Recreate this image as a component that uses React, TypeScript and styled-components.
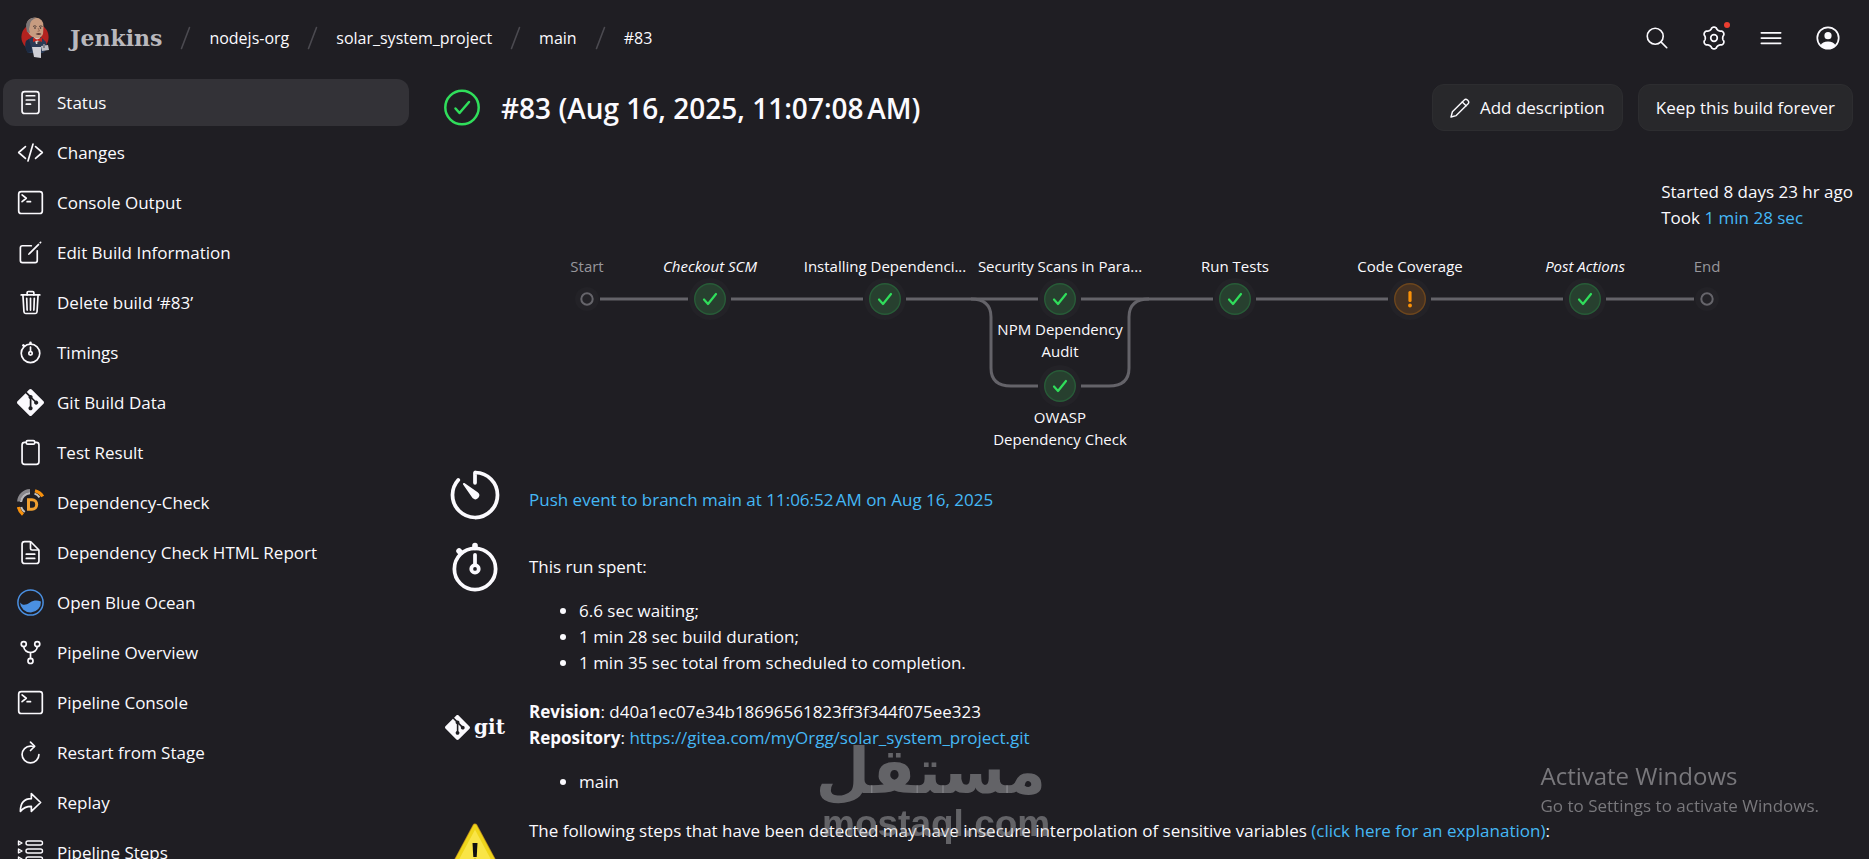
import React from "react";
import styled, { createGlobalStyle, css } from "styled-components";
import {
  IoReaderOutline,
  IoCodeSlashOutline,
  IoTerminalOutline,
  IoCreateOutline,
  IoTrashOutline,
  IoStopwatchOutline,
  IoClipboardOutline,
  IoDocumentTextOutline,
  IoGitNetworkOutline,
  IoRefreshOutline,
  IoArrowRedoOutline,
  IoSearchOutline,
  IoMenuOutline,
  IoTimerOutline,
} from "react-icons/io5";
import { SiGit } from "react-icons/si";

const color = {
  background: "#1f1e23",
  text: "#fbfafe",
  muted: "#97969b",
  link: "#45b8f5",
  active: "#333237",
  button: "#28282b",
  buttonBorder: "#2d2d30",
  green: "#30de5b",
  orange: "#fb9108",
  red: "#eb3e30",
};

const GlobalStyle = createGlobalStyle`
  *, *::before, *::after { box-sizing: border-box; }
  body {
    margin: 0;
    background: ${color.background};
    color: ${color.text};
    font-family: "Open Sans", "Noto Sans", sans-serif;
    font-size: 17px;
    line-height: 26px;
  }
  a { color: inherit; text-decoration: none; }
  ul, ol { list-style: none; margin: 0; padding: 0; }
`;

/* ---------- page frame ---------- */

const Page = styled.div`
  height: 100vh;
  overflow-y: auto;
  scrollbar-width: none;
`;

const Header = styled.header`
  display: flex;
  align-items: center;
  justify-content: space-between;
  height: 75px;
  padding: 0 27px 0 21px;
`;

const Brand = styled.a`
  display: flex;
  align-items: center;
  gap: 21px;
  color: #b9b8bd;
  font-family: "DejaVu Serif", Georgia, serif;
  font-size: 22px;
  font-weight: bold;
`;

const HeaderLeft = styled.div`
  display: flex;
  align-items: center;
`;

const Crumbs = styled.ol`
  display: flex;
  font-size: 16px;
`;

const Crumb = styled.li`
  display: flex;
  align-items: center;
  gap: 18px;
  margin-left: 18px;
`;

const HeaderActions = styled.div`
  display: flex;
  align-items: center;
  gap: 29px;
`;

const IconButton = styled.button`
  position: relative;
  display: grid;
  place-items: center;
  width: 28px;
  height: 28px;
  padding: 0;
  border: 0;
  background: none;
  color: ${color.text};
  font-size: 26px;
`;

const Alert = styled.span`
  position: absolute;
  top: -2px;
  right: -2px;
  width: 6px;
  height: 6px;
  border-radius: 50%;
  background: ${color.red};
`;

const Columns = styled.div`
  display: grid;
  grid-template-columns: 406px minmax(0, 1fr);
  gap: 32px;
  padding: 4px 16px 0 3px;
`;

/* ---------- side menu ---------- */

const Tasks = styled.ul`
  display: flex;
  flex-direction: column;
  gap: 3px;
`;

const Task = styled.a<{ $active?: boolean }>`
  display: flex;
  align-items: center;
  gap: 13px;
  height: 47px;
  padding: 0 14px;
  border-radius: 12px;
  ${(p) => p.$active && css`background: ${color.active};`}
`;

const TaskIcon = styled.span`
  display: grid;
  place-items: center;
  width: 27px;
  height: 27px;
  font-size: 27px;
`;

/* ---------- build header ---------- */

const Main = styled.main`
  padding-top: 5px;
`;

const BuildBar = styled.div`
  display: flex;
  align-items: center;
  gap: 15px;
  height: 47px;
`;

const Title = styled.h1`
  flex: 1;
  margin: 0 0 0 5px;
  font-size: 28px;
  font-weight: 600;
  line-height: 36px;
`;

const Button = styled.button`
  display: flex;
  align-items: center;
  gap: 10px;
  height: 47px;
  padding: 0 17px;
  border: 1px solid ${color.buttonBorder};
  border-radius: 12px;
  background: ${color.button};
  color: ${color.text};
  font: inherit;
`;

const Times = styled.div`
  width: fit-content;
  margin: 48px 0 0 auto;
`;

const Link = styled.a`
  color: ${color.link};
`;

/* ---------- stage graph ---------- */

const Graph = styled.section`
  position: relative;
  width: 1212px;
  height: 216px;
  margin: 20px auto 0;
  font-size: 15px;
  line-height: 22px;
`;

const StageLabel = styled.a<{ $x: number; $y: number; $italic?: boolean; $muted?: boolean }>`
  position: absolute;
  left: ${(p) => p.$x}px;
  top: ${(p) => p.$y}px;
  transform: translateX(-50%);
  text-align: center;
  white-space: pre;
  font-style: ${(p) => (p.$italic ? "italic" : "normal")};
  color: ${(p) => (p.$muted ? color.muted : color.text)};
`;

/* ---------- summary ---------- */

const Summary = styled.div`
  display: flex;
  flex-direction: column;
  gap: 16px;
`;

const SummaryRow = styled.section`
  display: grid;
  grid-template-columns: 68px 1fr;
  gap: 20px;
  align-items: start;
`;

const SummaryIcon = styled.span`
  display: flex;
  align-items: center;
  justify-content: center;
  gap: 4px;
  height: 56px;
  font-size: 60px;
`;

const GitWord = styled.span`
  font-family: "DejaVu Serif", serif;
  font-size: 20px;
  font-weight: bold;
  line-height: 26px;
`;

const Cause = styled.div`
  padding-top: 20px;
`;

const Spent = styled.div`
  padding-top: 15px;
`;

const Bullets = styled.ul`
  margin: 18px 0 7px;
  padding-left: 50px;
  list-style: disc;
`;

/* ---------- overlays ---------- */

const Watermark = styled.div`
  position: fixed;
  left: 822px;
  bottom: 15px;
  width: 224px;
  color: rgba(168, 168, 172, 0.5);
  font-weight: bold;
  text-align: center;
  white-space: nowrap;
  pointer-events: none;
`;

const WatermarkArabic = styled.div`
  font-family: "DejaVu Sans", sans-serif;
  font-size: 63px;
  line-height: 64px;
`;

const WatermarkLatin = styled.div`
  font-family: "Liberation Sans", Arial, sans-serif;
  font-size: 37px;
  line-height: 40px;
`;

const Activation = styled.aside`
  position: fixed;
  right: 50px;
  bottom: 40px;
  color: #79787c;
  pointer-events: none;
`;

const ActivationTitle = styled.div`
  font-size: 24px;
  line-height: 34px;
`;

/* ---------- drawings ---------- */

const JenkinsLogo = () => (
  <svg width="28" height="42" viewBox="0 0 28 42" aria-hidden="true">
    <circle cx="14" cy="20" r="13.6" fill="#b3221f" />
    <path d="M5 24 L11 20 L20 20 L25 25 Q27 33 22 36 L7 36 Q3 30 5 24Z" fill="#2a3a55" />
    <path d="M5 24 L8 22 L11 34 L7 36Q3 31 5 24Z" fill="#1c2a41" />
    <path d="M13 20 L19 20 L18 27 L15 27Z" fill="#d8d4d2" />
    <path d="M11 30 L20 30 L20 41 L13 40Z" fill="#cfcfd6" />
    <path d="M6 9 Q5 1 14 .5 Q23 1 22.5 10 L22 17 Q20 22 15 21 Q9 20 7 15Z" fill="#c79c80" />
    <path d="M6 15 Q3 5 9 2 Q12 0 15 1 Q9 3 9 8 L8 12 L9 16Z" fill="#7d7676" />
    <path d="M12 9.5 Q14 8 15.500 9.500 M18 9.500 Q20 8.200 21.500 9.500" stroke="#54403a" strokeWidth="1" fill="none" />
    <circle cx="14" cy="11" r=".8" fill="#2a2324" />
    <circle cx="19.500" cy="11" r=".8" fill="#2a2324" />
    <path d="M17 11 L18.500 14 L16.500 14.300" stroke="#8d5f4b" strokeWidth=".8" fill="none" />
    <path d="M14.500 17 Q18 15 20.500 17 Q18 19 14.500 17Z" fill="#5c3a34" />
    <path d="M12 20.500 L16 22.500 L21 20.500 L21 25 L16.500 23.500 L12 25Z" fill="#c3251f" />
    <circle cx="18" cy="26" r="1.800" fill="#3a3a40" />
    <path d="M20 29 L27 28 L28 33 L21 34Z" fill="#bdbcc2" />
    <path d="M22 27 L24 27 L24 31 L22 31Z" fill="#7f7f88" />
  </svg>
);

const Slash = () => (
  <svg width="11" height="24" viewBox="0 0 11 24" aria-hidden="true">
    <path d="M1.500 22.500 L9.500 1.500" stroke="#4b4a50" strokeWidth="1.600" strokeLinecap="round" />
  </svg>
);

/* Six rounded teeth, traced as a wave around a circle. */
const gearPath = (() => {
  const points: string[] = [];
  for (let i = 0; i < 144; i++) {
    const a = (i / 144) * Math.PI * 2;
    const wave = Math.cos(6 * a);
    const r = 9.8 + 1.1 * Math.sign(wave) * Math.pow(Math.abs(wave), 0.6);
    points.push(`${(14 + r * Math.sin(a)).toFixed(2)} ${(14 - r * Math.cos(a)).toFixed(2)}`);
  }
  return `M${points.join("L")}Z`;
})();

const Gear = () => (
  <svg width="28" height="28" viewBox="0 0 28 28" fill="none" stroke="currentColor" strokeWidth="1.700" strokeLinejoin="round" aria-hidden="true">
    <path d={gearPath} />
    <circle cx="14" cy="14" r="3.300" />
  </svg>
);

const User = () => (
  <svg width="28" height="28" viewBox="0 0 28 28" aria-hidden="true">
    <circle cx="14" cy="14" r="10.700" fill="none" stroke="currentColor" strokeWidth="1.700" />
    <circle cx="14" cy="11.700" r="3.600" fill="currentColor" />
    <path d="M6.300 21.500 Q8.500 17.600 14 17.600 Q19.500 17.600 21.700 21.500 A10.700 10.700 0 0 1 6.300 21.500Z" fill="currentColor" />
  </svg>
);

const Pencil = () => (
  <svg width="20" height="20" viewBox="0 0 20 20" fill="none" stroke="currentColor" strokeWidth="1.400" strokeLinejoin="round" strokeLinecap="round" aria-hidden="true">
    <path d="M1 19 L2.400 13.800 L14.300 1.900 Q15.800 .4 17.700 2.300 Q19.600 4.200 18.100 5.700 L6.200 17.600Z" />
    <path d="M12.300 3.900 L16.100 7.700" />
  </svg>
);

const DependencyCheck = () => (
  <svg width="27" height="27" viewBox="0 0 27 27" fill="none" aria-hidden="true">
    <path d="M1.600 12.500 A12 12 0 0 1 13 1.500" stroke="#88878c" strokeWidth="3" />
    <path d="M4 13 A9.500 9.500 0 0 1 13 4.200" stroke="#b7b6ba" strokeWidth="2.200" />
    <path d="M18 1.800 A13 13 0 0 1 25.700 7.500" stroke="#f7900c" strokeWidth="3.200" />
    <path d="M17.500 4.600 A10 10 0 0 1 22.500 8.300" stroke="#c9c4bd" strokeWidth="2" />
    <path d="M1.500 18 A12.500 12.500 0 0 0 6 25.500" stroke="#f7900c" strokeWidth="3.200" />
    <path d="M4.200 18 A9.500 9.500 0 0 0 7.800 23" stroke="#c9c4bd" strokeWidth="2" />
    <path d="M11.500 10.800 H15 A4.700 4.700 0 0 1 15 20.200 H11.500Z" stroke="#f0a030" strokeWidth="3" />
  </svg>
);

const BlueOcean = () => (
  <svg width="27" height="27" viewBox="0 0 27 27" aria-hidden="true">
    <circle cx="13.500" cy="13.500" r="12.600" fill="none" stroke="#4a90e2" strokeWidth="1.500" />
    <path d="M3 13.500 C6 17 9 16 13 13.500 C17 11 20 11 24 12.500 A10.500 10.500 0 0 1 3 13.500Z" fill="#4a90e2" />
  </svg>
);

const Steps = () => (
  <svg width="27" height="27" viewBox="0 0 27 27" fill="none" stroke="currentColor" strokeWidth="1.400" strokeLinejoin="round" aria-hidden="true">
    {[4, 12, 20].map((y) => (
      <g key={y}>
        <path d={`M1.500 ${y - 2} L5 ${y} L1.500 ${y + 2}Z`} />
        <rect x="9" y={y - 2} width="16.500" height="4" rx="2" />
      </g>
    ))}
  </svg>
);

const SuccessBadge = () => (
  <svg width="40" height="40" viewBox="0 0 40 40" fill="none" stroke={color.green} aria-label="Success" role="img">
    <circle cx="21" cy="19.500" r="16.700" strokeWidth="2.500" />
    <path d="M14.500 20.500 L18.500 25 L28 14" strokeWidth="2.500" strokeLinecap="round" strokeLinejoin="round" />
  </svg>
);

const Warning = () => (
  <svg width="56" height="56" viewBox="0 0 56 56" aria-hidden="true">
    <path d="M28 8 L50 49 H6Z" fill="#f9e547" stroke="#b98a1c" strokeWidth="5" strokeLinejoin="round" />
    <path d="M28 8 L50 49 H6Z" fill="#f9e547" stroke="#efd51a" strokeWidth="3.500" strokeLinejoin="round" />
    <path d="M25.500 25 H30.500 L29.700 39 H26.300Z" fill="#111" />
    <circle cx="28" cy="43.500" r="2.700" fill="#111" />
  </svg>
);

/* ---------- stage graph parts ---------- */

type NodeState = "edge" | "success" | "unstable";

const StageNode = ({ x, y, state }: { x: number; y: number; state: NodeState }) => {
  if (state === "edge") {
    return (
      <g>
        <circle cx={x} cy={y} r="12" fill="#232227" />
        <circle cx={x} cy={y} r="5.700" fill="none" stroke="#66656b" strokeWidth="2" />
      </g>
    );
  }
  const ok = state === "success";
  return (
    <g>
      <circle cx={x} cy={y} r="21" fill="#232227" />
      <circle cx={x} cy={y} r="15.300" fill={ok ? "#27402f" : "#463222"} stroke={ok ? "#285c38" : "#6d461d"} strokeWidth="1.400" />
      {ok ? (
        <path
          d={`M${x - 6} ${y + 0.5} L${x - 2} ${y + 5} L${x + 6} ${y - 5}`}
          fill="none"
          stroke={color.green}
          strokeWidth="2.200"
          strokeLinecap="round"
          strokeLinejoin="round"
        />
      ) : (
        <g fill={color.orange}>
          <rect x={x - 1.6} y={y - 8} width="3.200" height="11" rx="1.500" />
          <circle cx={x} cy={y + 6.5} r="1.900" />
        </g>
      )}
    </g>
  );
};

const stages: { x: number; label: string; state: NodeState; italic?: boolean; muted?: boolean }[] = [
  { x: 46, label: "Start", state: "edge", muted: true },
  { x: 169, label: "Checkout SCM", state: "success", italic: true },
  { x: 344, label: "Installing Dependenci...", state: "success" },
  { x: 519, label: "Security Scans in Para...", state: "success" },
  { x: 694, label: "Run Tests", state: "success" },
  { x: 869, label: "Code Coverage", state: "unstable" },
  { x: 1044, label: "Post Actions", state: "success", italic: true },
  { x: 1166, label: "End", state: "edge", muted: true },
];

const connectors = [
  [59, 147], [190, 322], [365, 497], [540, 672], [715, 847], [890, 1022], [1065, 1153],
];

const StageGraph = () => (
  <Graph aria-label="Pipeline stages">
    <svg width="1212" height="180" viewBox="0 0 1212 180" fill="none">
      <g stroke="#646369" strokeWidth="3">
        {connectors.map(([from, to]) => (
          <path key={from} d={`M${from} 48 H${to}`} />
        ))}
        <path d="M430 48 Q450 48 450 66 V117 Q450 135 470 135 H497" />
        <path d="M540 135 H568 Q588 135 588 117 V66 Q588 48 608 48" />
      </g>
      {stages.map((s) => (
        <StageNode key={s.label} x={s.x} y={48} state={s.state} />
      ))}
      <StageNode x={519} y={135} state="success" />
    </svg>
    {stages.map((s) => (
      <StageLabel key={s.label} href="#stage" $x={s.x} $y={4} $italic={s.italic} $muted={s.muted}>
        {s.label}
      </StageLabel>
    ))}
    <StageLabel href="#stage" $x={519} $y={67}>{"NPM Dependency\nAudit"}</StageLabel>
    <StageLabel href="#stage" $x={519} $y={155}>{"OWASP\nDependency Check"}</StageLabel>
  </Graph>
);

const tasks: { label: string; icon: React.ReactNode; active?: boolean }[] = [
  { label: "Status", icon: <IoReaderOutline />, active: true },
  { label: "Changes", icon: <IoCodeSlashOutline /> },
  { label: "Console Output", icon: <IoTerminalOutline /> },
  { label: "Edit Build Information", icon: <IoCreateOutline /> },
  { label: "Delete build ‘#83’", icon: <IoTrashOutline /> },
  { label: "Timings", icon: <IoStopwatchOutline /> },
  { label: "Git Build Data", icon: <SiGit /> },
  { label: "Test Result", icon: <IoClipboardOutline /> },
  { label: "Dependency-Check", icon: <DependencyCheck /> },
  { label: "Dependency Check HTML Report", icon: <IoDocumentTextOutline /> },
  { label: "Open Blue Ocean", icon: <BlueOcean /> },
  { label: "Pipeline Overview", icon: <IoGitNetworkOutline /> },
  { label: "Pipeline Console", icon: <IoTerminalOutline /> },
  { label: "Restart from Stage", icon: <IoRefreshOutline /> },
  { label: "Replay", icon: <IoArrowRedoOutline /> },
  { label: "Pipeline Steps", icon: <Steps /> },
];

export default function App() {
  return (
    <Page>
      <GlobalStyle />
      <Header>
        <HeaderLeft>
          <Brand href="#home">
            <JenkinsLogo />
            Jenkins
          </Brand>
          <Crumbs>
            {["nodejs-org", "solar_system_project", "main", "#83"].map((crumb) => (
              <Crumb key={crumb}>
                <Slash />
                <a href="#crumb">{crumb}</a>
              </Crumb>
            ))}
          </Crumbs>
        </HeaderLeft>
        <HeaderActions>
          <IconButton aria-label="Search"><IoSearchOutline /></IconButton>
          <IconButton aria-label="Manage"><Gear /><Alert /></IconButton>
          <IconButton aria-label="Menu"><IoMenuOutline size={28} /></IconButton>
          <IconButton aria-label="User"><User /></IconButton>
        </HeaderActions>
      </Header>

      <Columns>
        <nav aria-label="Build">
          <Tasks>
            {tasks.map((task) => (
              <li key={task.label}>
                <Task href="#task" $active={task.active}>
                  <TaskIcon>{task.icon}</TaskIcon>
                  {task.label}
                </Task>
              </li>
            ))}
          </Tasks>
        </nav>

        <Main>
          <BuildBar>
            <SuccessBadge />
            <Title>#83 (Aug 16, 2025, 11:07:08&#8239;AM)</Title>
            <Button><Pencil />Add description</Button>
            <Button>Keep this build forever</Button>
          </BuildBar>

          <Times>
            <div>Started 8 days 23 hr ago</div>
            <div>Took <Link href="#duration">1 min 28 sec</Link></div>
          </Times>

          <StageGraph />

          <Summary>
            <SummaryRow>
              <SummaryIcon><IoTimerOutline /></SummaryIcon>
              <Cause>
                <Link href="#event">Push event to branch main at 11:06:52&#8239;AM on Aug 16, 2025</Link>
              </Cause>
            </SummaryRow>
            <SummaryRow>
              <SummaryIcon><IoStopwatchOutline /></SummaryIcon>
              <Spent>
                This run spent:
                <Bullets>
                  <li>6.6 sec waiting;</li>
                  <li>1 min 28 sec build duration;</li>
                  <li>1 min 35 sec total from scheduled to completion.</li>
                </Bullets>
              </Spent>
            </SummaryRow>
            <SummaryRow>
              <SummaryIcon><SiGit size={25} /><GitWord>git</GitWord></SummaryIcon>
              <div>
                <div><b>Revision</b>: d40a1ec07e34b18696561823ff3f344f075ee323</div>
                <div><b>Repository</b>: <Link href="#repository">https://gitea.com/myOrgg/solar_system_project.git</Link></div>
                <Bullets>
                  <li>main</li>
                </Bullets>
              </div>
            </SummaryRow>
            <SummaryRow>
              <SummaryIcon><Warning /></SummaryIcon>
              <div>
                The following steps that have been detected may have insecure interpolation of sensitive variables{" "}
                <Link href="#explanation">(click here for an explanation)</Link>:
              </div>
            </SummaryRow>
          </Summary>
        </Main>
      </Columns>

      <Watermark>
        <WatermarkArabic lang="ar" dir="rtl">مستقل</WatermarkArabic>
        <WatermarkLatin>mostaql.com</WatermarkLatin>
      </Watermark>

      <Activation>
        <ActivationTitle>Activate Windows</ActivationTitle>
        <div>Go to Settings to activate Windows.</div>
      </Activation>
    </Page>
  );
}
